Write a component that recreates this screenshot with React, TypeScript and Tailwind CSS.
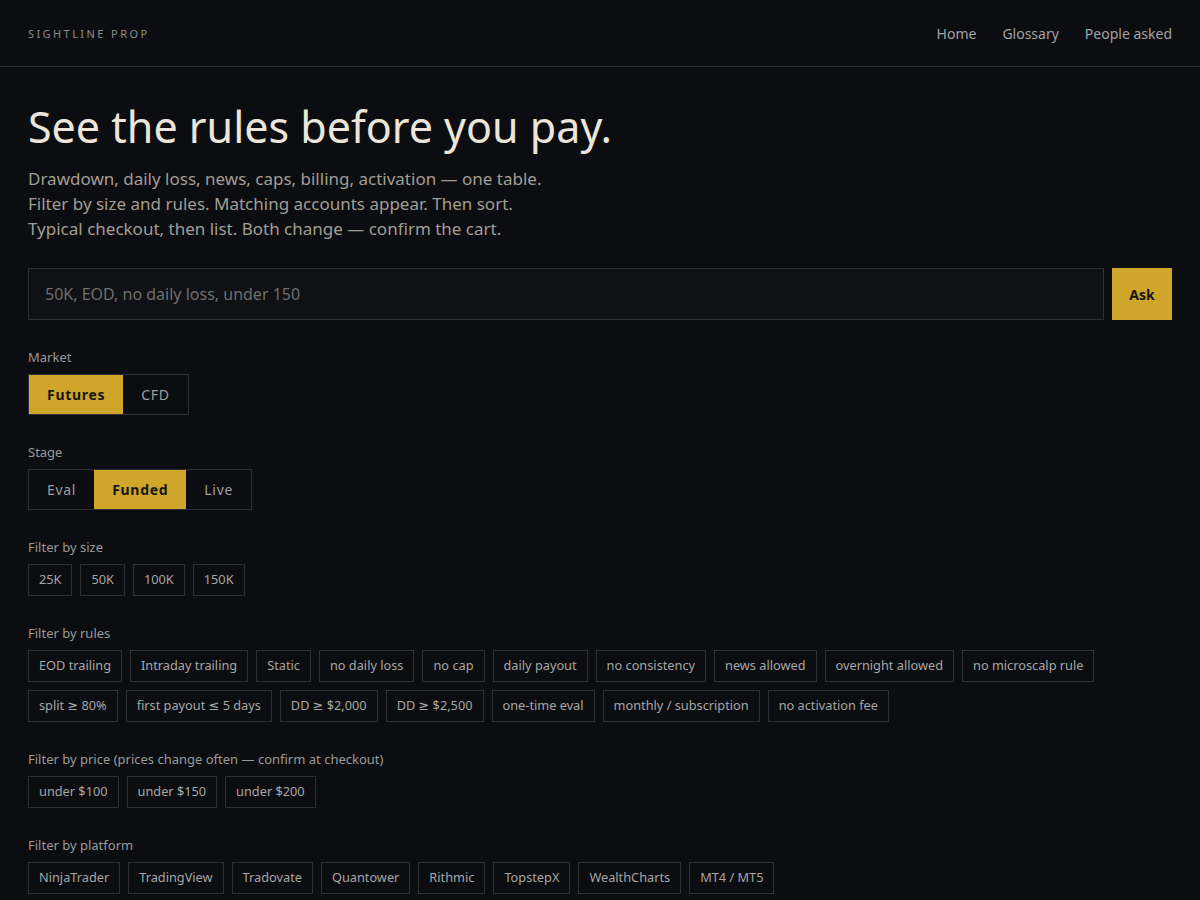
import { useState } from "react";

const sizes = ["25K", "50K", "100K", "150K"];

const rules = [
  "EOD trailing",
  "Intraday trailing",
  "Static",
  "no daily loss",
  "no cap",
  "daily payout",
  "no consistency",
  "news allowed",
  "overnight allowed",
  "no microscalp rule",
  "split ≥ 80%",
  "first payout ≤ 5 days",
  "DD ≥ $2,000",
  "DD ≥ $2,500",
  "one-time eval",
  "monthly / subscription",
  "no activation fee",
];

const prices = ["under $100", "under $150", "under $200"];

const platforms = [
  "NinjaTrader",
  "TradingView",
  "Tradovate",
  "Quantower",
  "Rithmic",
  "TopstepX",
  "WealthCharts",
  "MT4 / MT5",
];

// comparison signs come out of a math-friendly font
function withSigns(text: string) {
  return text.split(/([≥≤])/).map((part, i) =>
    part === "≥" || part === "≤" ? (
      <span key={i} className="font-['DejaVu_Sans']">
        {part}
      </span>
    ) : (
      part
    )
  );
}

function Segmented({
  options,
  value,
  onChange,
}: {
  options: string[];
  value: string;
  onChange: (v: string) => void;
}) {
  return (
    <div className="inline-flex border border-[#2e3036]">
      {options.map((opt) => (
        <button
          key={opt}
          onClick={() => onChange(opt)}
          className={
            opt === value
              ? "h-[39px] px-[18px] text-[14px] tracking-[0.05em] font-bold bg-[#cfa52a] text-[#16140f]"
              : "h-[39px] px-[18px] text-[14px] tracking-[0.05em] text-[#9d9d9d]"
          }
        >
          {opt}
        </button>
      ))}
    </div>
  );
}

function ChipGroup({ label, items }: { label: string; items: string[] }) {
  return (
    <div className="mt-7">
      <p className="text-[13px] leading-[18px] text-[#9a9a9a] mb-2">{label}</p>
      <div className="flex flex-wrap gap-2">
        {items.map((item) => (
          <button
            key={item}
            className="h-8 px-[10px] border border-[#2e3036] text-[12.75px] text-[#a6a6a6]"
          >
            {withSigns(item)}
          </button>
        ))}
      </div>
    </div>
  );
}

export default function App() {
  const [market, setMarket] = useState("Futures");
  const [stage, setStage] = useState("Funded");

  return (
    <div
      className="min-h-screen bg-[#0c0d10] text-[#e9e4da]"
      style={{ fontFamily: '"Noto Sans", "Open Sans", sans-serif' }}
    >
      <header className="h-[67px] border-b border-[#2a2c31] px-7 flex items-center justify-between">
        <span className="mt-[3px] text-[11px] tracking-[0.22em] text-[#8c8c8c]">
          SIGHTLINE PROP
        </span>
        <nav className="flex items-center gap-[26px] text-[14px] text-[#a3a3a3]">
          <a href="#">Home</a>
          <a href="#">Glossary</a>
          <a href="#">People asked</a>
        </nav>
      </header>

      <main className="px-7 pt-[34px]">
        <h1 className="text-[43px] leading-[52px] text-[#ece6da]">
          See the rules before you pay.
        </h1>
        <p className="mt-[13px] text-[17px] leading-[25px] text-[#a29d94]">
          Drawdown, daily loss, news, caps, billing, activation — one table.
          <br />
          Filter by size and rules. Matching accounts appear. Then sort.
          <br />
          Typical checkout, then list. Both change — confirm the cart.
        </p>

        <div className="mt-[27px] flex gap-2">
          <input
            className="flex-1 h-[52px] bg-[#0f1115] border border-[#2e3036] px-4 text-[16px] text-[#d6d6d6] placeholder:text-[#6e6e6e] outline-none"
            placeholder="50K, EOD, no daily loss, under 150"
          />
          <button className="w-[60px] h-[52px] bg-[#cfa52a] text-[14px] font-bold text-[#16140f]">
            Ask
          </button>
        </div>

        <div className="mt-7">
          <p className="text-[13px] leading-[18px] text-[#9a9a9a] mb-2">Market</p>
          <Segmented options={["Futures", "CFD"]} value={market} onChange={setMarket} />
        </div>

        <div className="mt-7">
          <p className="text-[13px] leading-[18px] text-[#9a9a9a] mb-2">Stage</p>
          <Segmented options={["Eval", "Funded", "Live"]} value={stage} onChange={setStage} />
        </div>

        <ChipGroup label="Filter by size" items={sizes} />
        <ChipGroup label="Filter by rules" items={rules} />
        <ChipGroup
          label="Filter by price (prices change often — confirm at checkout)"
          items={prices}
        />
        <ChipGroup label="Filter by platform" items={platforms} />
      </main>
    </div>
  );
}
